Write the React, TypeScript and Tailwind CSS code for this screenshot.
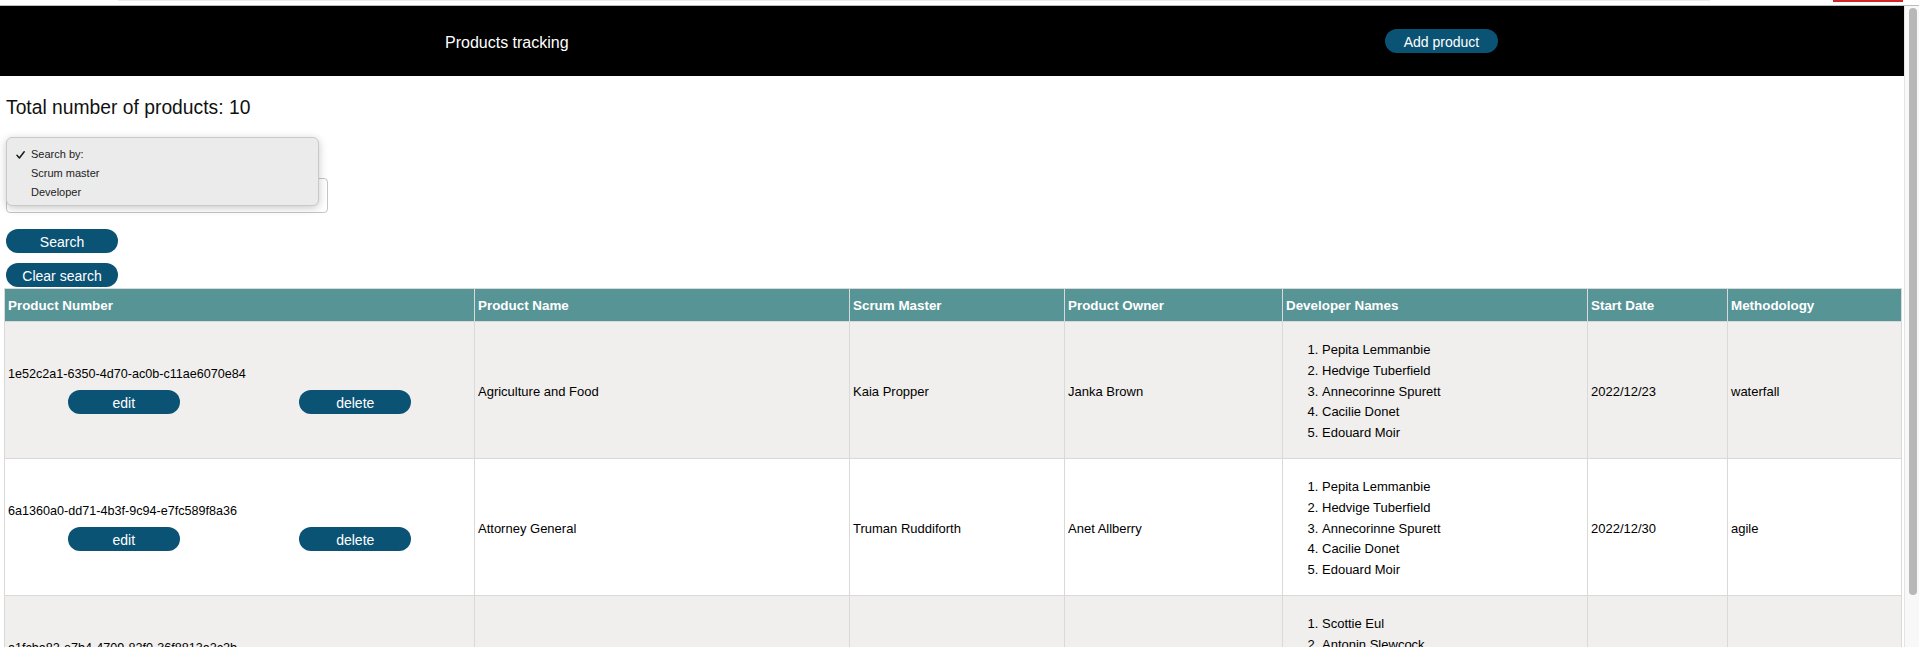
import React from 'react'

type Product = {
  id: string
  name: string
  scrumMaster: string
  owner: string
  developers: string[]
  startDate: string
  methodology: string
}

const products: Product[] = [
  {
    id: '1e52c2a1-6350-4d70-ac0b-c11ae6070e84',
    name: 'Agriculture and Food',
    scrumMaster: 'Kaia Propper',
    owner: 'Janka Brown',
    developers: ['Pepita Lemmanbie', 'Hedvige Tuberfield', 'Annecorinne Spurett', 'Cacilie Donet', 'Edouard Moir'],
    startDate: '2022/12/23',
    methodology: 'waterfall',
  },
  {
    id: '6a1360a0-dd71-4b3f-9c94-e7fc589f8a36',
    name: 'Attorney General',
    scrumMaster: 'Truman Ruddiforth',
    owner: 'Anet Allberry',
    developers: ['Pepita Lemmanbie', 'Hedvige Tuberfield', 'Annecorinne Spurett', 'Cacilie Donet', 'Edouard Moir'],
    startDate: '2022/12/30',
    methodology: 'agile',
  },
  {
    id: 'a1fcba82-e7b4-4709-82f0-36f8813a2c2b',
    name: 'Citizens Services',
    scrumMaster: 'Kaia Propper',
    owner: 'Janka Brown',
    developers: ['Scottie Eul', 'Antonin Slewcock', 'Hedvige Tuberfield', 'Cacilie Donet', 'Edouard Moir'],
    startDate: '2023/01/04',
    methodology: 'agile',
  },
]

const headers = ['Product Number', 'Product Name', 'Scrum Master', 'Product Owner', 'Developer Names', 'Start Date', 'Methodology']

const Pill = ({ children, className = '' }: { children: React.ReactNode; className?: string }) => (
  <button className={`h-[24px] rounded-full bg-[#0b5374] pt-[1px] text-[14px] leading-none text-white ${className}`}>
    {children}
  </button>
)

const ProductRow = ({ product, shaded }: { product: Product; shaded: boolean }) => {
  const cell = `border-r border-b border-[#d9d9d9] px-[3px] text-[13px] text-black ${shaded ? 'bg-[#f0efed]' : 'bg-white'}`
  return (
    <>
      <div className={`${cell} flex flex-col justify-center`}>
        <div className="text-[12.6px] leading-[18px]">{product.id}</div>
        <div className="mt-[7px] flex justify-around">
          <Pill className="w-[112px]">edit</Pill>
          <Pill className="w-[112px]">delete</Pill>
        </div>
      </div>
      <div className={`${cell} flex items-center pt-[3px]`}>{product.name}</div>
      <div className={`${cell} flex items-center pt-[3px]`}>{product.scrumMaster}</div>
      <div className={`${cell} flex items-center pt-[3px]`}>{product.owner}</div>
      <div className={`${cell} flex items-center`}>
        <ol className="mb-[14px] mt-[18px] list-decimal pl-[36px]">
          {product.developers.map((dev) => (
            <li key={dev} className="leading-[20.8px]">{dev}</li>
          ))}
        </ol>
      </div>
      <div className={`${cell} flex items-center pt-[3px]`}>{product.startDate}</div>
      <div className={`${cell} flex items-center pt-[3px]`}>{product.methodology}</div>
    </>
  )
}

const App = () => {
  return (
    <div className="h-[647px] w-[1919px] overflow-hidden bg-white font-['Liberation_Sans',Arial,sans-serif]">
      {/* top strip */}
      <div className="h-[6px] border-b border-[#bdbdbd] bg-white">
        <div className="flex">
          <div className="ml-[118px] h-[1px] w-[1592px] bg-[#e9e9e9]"></div>
          <div className="ml-[123px] h-[2px] w-[70px] bg-[#cf2727]"></div>
        </div>
      </div>

      <div className="flex h-[641px]">
        <div className="relative w-[1904px] overflow-hidden">
          <header className="flex h-[70px] items-center bg-black">
            <div className="w-[1385px] pl-[445px] pt-[3px] text-[16px] text-white">Products tracking</div>
            <Pill className="w-[113px]">Add product</Pill>
          </header>

          <div className="pl-[6px]">
            <h2 className="mt-[21px] text-[19.3px] leading-[22px] text-[#111]">Total number of products: 10</h2>

            <div className="mt-[21px] h-[22px] w-[150px] rounded-[4px] border border-[#c6c6c6] bg-white"></div>
            <div className="mt-[16px] h-[35px] w-[322px] rounded-[4px] border border-[#c6c6c6] bg-white"></div>

            <Pill className="mt-[16px] block w-[112px]">Search</Pill>
            <Pill className="mt-[10px] block w-[112px]">Clear search</Pill>
          </div>

          {/* open select menu */}
          <div className="absolute left-[6px] top-[131px] h-[69px] w-[313px] rounded-[6px] border border-[#c9c9c9] bg-[#ebebeb] pt-[7px] text-[11px] text-[#222] shadow-[0_2px_8px_rgba(0,0,0,0.22)]">
            <div className="relative flex h-[19px] items-center pl-[24px]">
              <svg className="absolute left-[9px] top-[6px]" width="9" height="8" viewBox="0 0 9 8" fill="none">
                <path d="M1 4.3 L3.4 7 L8.2 0.8" stroke="#1a1a1a" strokeWidth="1.5" strokeLinecap="round" strokeLinejoin="round" />
              </svg>
              Search by:
            </div>
            <div className="flex h-[19px] items-center pl-[24px]">Scrum master</div>
            <div className="flex h-[19px] items-center pl-[24px]">Developer</div>
          </div>

          <div className="ml-[4px] mt-[1px] grid w-[1898px] grid-cols-[470px_375px_215px_218px_305px_140px_174px] border-l border-t border-[#d9d9d9]">
            {headers.map((h) => (
              <div key={h} className="flex h-[33px] items-center border-r border-b border-[#d9d9d9] bg-[#579495] px-[3px] pt-[2px] text-[13.4px] font-bold text-white">
                {h}
              </div>
            ))}
            {products.map((p, i) => (
              <ProductRow key={p.id} product={p} shaded={i % 2 === 0} />
            ))}
          </div>
        </div>

        {/* scrollbar */}
        <div className="w-[15px] border-l border-[#e4e4e4] bg-[#f8f8f8]">
          <div className="ml-[4px] mt-[2px] h-[587px] w-[8px] rounded-full bg-[#b8b8b8]"></div>
        </div>
      </div>
    </div>
  )
}

export default App
